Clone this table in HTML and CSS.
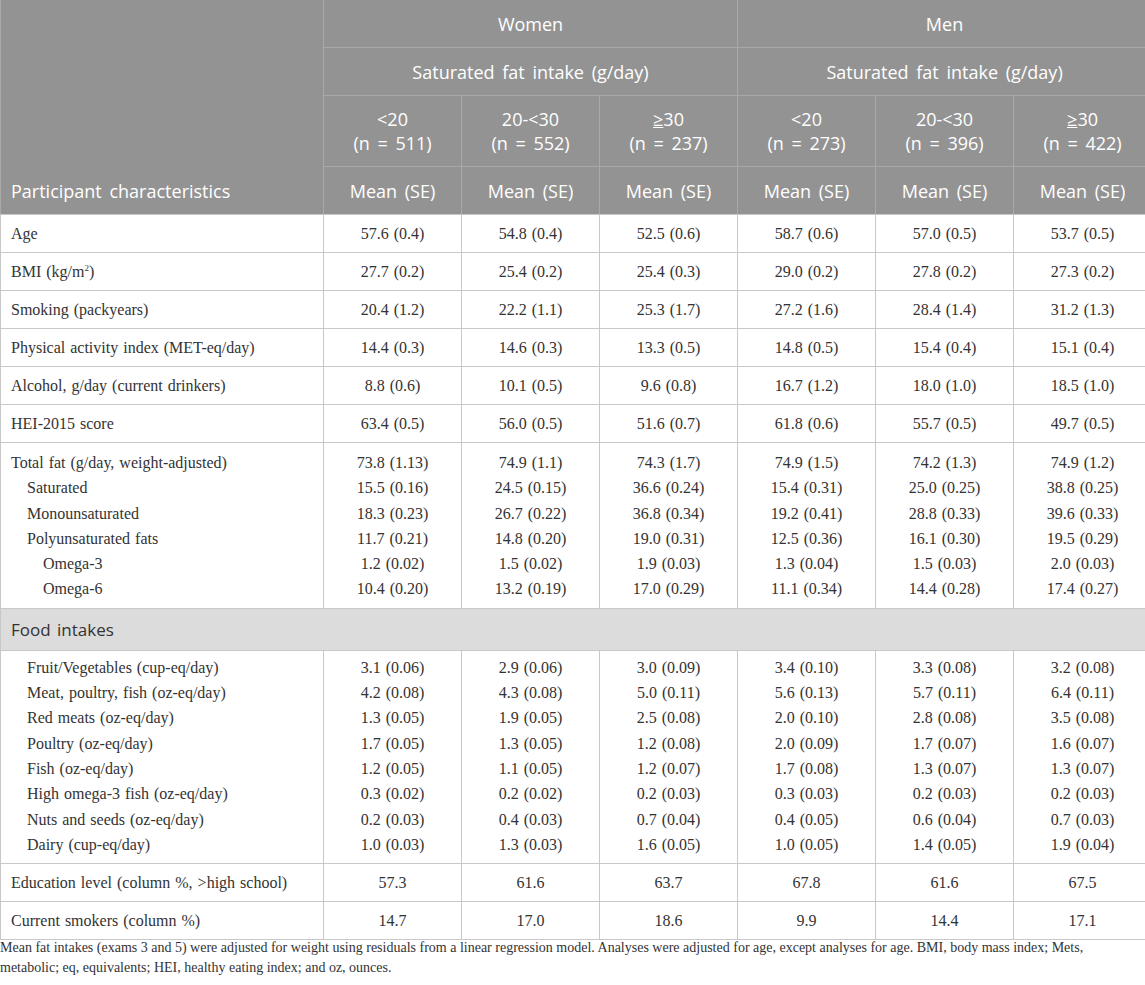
FILE: index.html
```html
<!DOCTYPE html>
<html lang="en">
<head>
    <meta charset="UTF-8">
    <meta name="viewport" content="width=device-width, initial-scale=1.0">
    <title>Participant characteristics by saturated fat intake</title>
    <link rel="stylesheet" href="styles.css">
</head>
<body>
    <div class="table-wrap">
        <table class="data-table">
            <colgroup>
                <col class="col-label">
                <col class="col-val"><col class="col-val"><col class="col-val">
                <col class="col-val"><col class="col-val"><col class="col-val">
            </colgroup>
            <thead>
                <tr class="h-row">
                    <th rowspan="4" class="h-label">Participant characteristics</th>
                    <th colspan="3">Women</th>
                    <th colspan="3">Men</th>
                </tr>
                <tr class="h-row">
                    <th colspan="3">Saturated fat intake (g/day)</th>
                    <th colspan="3">Saturated fat intake (g/day)</th>
                </tr>
                <tr class="h-row h-range">
                    <th>&lt;20<br>(n = 511)</th>
                    <th>20-&lt;30<br>(n = 552)</th>
                    <th><span class="geq">≥</span>30<br>(n = 237)</th>
                    <th>&lt;20<br>(n = 273)</th>
                    <th>20-&lt;30<br>(n = 396)</th>
                    <th><span class="geq">≥</span>30<br>(n = 422)</th>
                </tr>
                <tr class="h-row">
                    <th>Mean (SE)</th>
                    <th>Mean (SE)</th>
                    <th>Mean (SE)</th>
                    <th>Mean (SE)</th>
                    <th>Mean (SE)</th>
                    <th>Mean (SE)</th>
                </tr>
            </thead>

            <tbody class="single">
                <tr><td>Age</td><td>57.6 (0.4)</td><td>54.8 (0.4)</td><td>52.5 (0.6)</td><td>58.7 (0.6)</td><td>57.0 (0.5)</td><td>53.7 (0.5)</td></tr>
                <tr><td>BMI (kg/m<sup>2</sup>)</td><td>27.7 (0.2)</td><td>25.4 (0.2)</td><td>25.4 (0.3)</td><td>29.0 (0.2)</td><td>27.8 (0.2)</td><td>27.3 (0.2)</td></tr>
                <tr><td>Smoking (packyears)</td><td>20.4 (1.2)</td><td>22.2 (1.1)</td><td>25.3 (1.7)</td><td>27.2 (1.6)</td><td>28.4 (1.4)</td><td>31.2 (1.3)</td></tr>
                <tr><td>Physical activity index (MET-eq/day)</td><td>14.4 (0.3)</td><td>14.6 (0.3)</td><td>13.3 (0.5)</td><td>14.8 (0.5)</td><td>15.4 (0.4)</td><td>15.1 (0.4)</td></tr>
                <tr><td>Alcohol, g/day (current drinkers)</td><td>8.8 (0.6)</td><td>10.1 (0.5)</td><td>9.6 (0.8)</td><td>16.7 (1.2)</td><td>18.0 (1.0)</td><td>18.5 (1.0)</td></tr>
                <tr><td>HEI-2015 score</td><td>63.4 (0.5)</td><td>56.0 (0.5)</td><td>51.6 (0.7)</td><td>61.8 (0.6)</td><td>55.7 (0.5)</td><td>49.7 (0.5)</td></tr>
            </tbody>

            <tbody class="group group-fat">
                <tr><td>Total fat (g/day, weight-adjusted)</td><td>73.8 (1.13)</td><td>74.9 (1.1)</td><td>74.3 (1.7)</td><td>74.9 (1.5)</td><td>74.2 (1.3)</td><td>74.9 (1.2)</td></tr>
                <tr><td class="indent-1">Saturated</td><td>15.5 (0.16)</td><td>24.5 (0.15)</td><td>36.6 (0.24)</td><td>15.4 (0.31)</td><td>25.0 (0.25)</td><td>38.8 (0.25)</td></tr>
                <tr><td class="indent-1">Monounsaturated</td><td>18.3 (0.23)</td><td>26.7 (0.22)</td><td>36.8 (0.34)</td><td>19.2 (0.41)</td><td>28.8 (0.33)</td><td>39.6 (0.33)</td></tr>
                <tr><td class="indent-1">Polyunsaturated fats</td><td>11.7 (0.21)</td><td>14.8 (0.20)</td><td>19.0 (0.31)</td><td>12.5 (0.36)</td><td>16.1 (0.30)</td><td>19.5 (0.29)</td></tr>
                <tr><td class="indent-2">Omega-3</td><td>1.2 (0.02)</td><td>1.5 (0.02)</td><td>1.9 (0.03)</td><td>1.3 (0.04)</td><td>1.5 (0.03)</td><td>2.0 (0.03)</td></tr>
                <tr><td class="indent-2">Omega-6</td><td>10.4 (0.20)</td><td>13.2 (0.19)</td><td>17.0 (0.29)</td><td>11.1 (0.34)</td><td>14.4 (0.28)</td><td>17.4 (0.27)</td></tr>
            </tbody>

            <tbody class="section">
                <tr><td colspan="7">Food intakes</td></tr>
            </tbody>

            <tbody class="group group-food">
                <tr><td class="indent-1">Fruit/Vegetables (cup-eq/day)</td><td>3.1 (0.06)</td><td>2.9 (0.06)</td><td>3.0 (0.09)</td><td>3.4 (0.10)</td><td>3.3 (0.08)</td><td>3.2 (0.08)</td></tr>
                <tr><td class="indent-1">Meat, poultry, fish (oz-eq/day)</td><td>4.2 (0.08)</td><td>4.3 (0.08)</td><td>5.0 (0.11)</td><td>5.6 (0.13)</td><td>5.7 (0.11)</td><td>6.4 (0.11)</td></tr>
                <tr><td class="indent-1">Red meats (oz-eq/day)</td><td>1.3 (0.05)</td><td>1.9 (0.05)</td><td>2.5 (0.08)</td><td>2.0 (0.10)</td><td>2.8 (0.08)</td><td>3.5 (0.08)</td></tr>
                <tr><td class="indent-1">Poultry (oz-eq/day)</td><td>1.7 (0.05)</td><td>1.3 (0.05)</td><td>1.2 (0.08)</td><td>2.0 (0.09)</td><td>1.7 (0.07)</td><td>1.6 (0.07)</td></tr>
                <tr><td class="indent-1">Fish (oz-eq/day)</td><td>1.2 (0.05)</td><td>1.1 (0.05)</td><td>1.2 (0.07)</td><td>1.7 (0.08)</td><td>1.3 (0.07)</td><td>1.3 (0.07)</td></tr>
                <tr><td class="indent-1">High omega-3 fish (oz-eq/day)</td><td>0.3 (0.02)</td><td>0.2 (0.02)</td><td>0.2 (0.03)</td><td>0.3 (0.03)</td><td>0.2 (0.03)</td><td>0.2 (0.03)</td></tr>
                <tr><td class="indent-1">Nuts and seeds (oz-eq/day)</td><td>0.2 (0.03)</td><td>0.4 (0.03)</td><td>0.7 (0.04)</td><td>0.4 (0.05)</td><td>0.6 (0.04)</td><td>0.7 (0.03)</td></tr>
                <tr><td class="indent-1">Dairy (cup-eq/day)</td><td>1.0 (0.03)</td><td>1.3 (0.03)</td><td>1.6 (0.05)</td><td>1.0 (0.05)</td><td>1.4 (0.05)</td><td>1.9 (0.04)</td></tr>
            </tbody>

            <tbody class="single">
                <tr><td>Education level (column %, &gt;high school)</td><td>57.3</td><td>61.6</td><td>63.7</td><td>67.8</td><td>61.6</td><td>67.5</td></tr>
                <tr><td>Current smokers (column %)</td><td>14.7</td><td>17.0</td><td>18.6</td><td>9.9</td><td>14.4</td><td>17.1</td></tr>
            </tbody>
        </table>
    </div>

    <p class="footnote">Mean fat intakes (exams 3 and 5) were adjusted for weight using residuals from a linear regression model. Analyses were adjusted for age, except analyses for age. BMI, body mass index; Mets, metabolic; eq, equivalents; HEI, healthy eating index; and oz, ounces.</p>
</body>
</html>
```

FILE: styles.css
```css
html, body {
    margin: 0;
    padding: 0;
    background: #ffffff;
    overflow: hidden;
}
body {
    font-family: "Liberation Serif", "Times New Roman", serif;
    color: #333333;
    width: 1145px;
}
.table-wrap {
    width: 1145px;
    overflow: hidden;
}
.data-table {
    width: 1151px;
    border-collapse: collapse;
    table-layout: fixed;
    font-size: 16px;
    word-spacing: 1px;
}
.col-label {
    width: 323px;
}
.col-val {
    width: 138px;
}

/* header */
.data-table thead th {
    background: #939393;
    color: #ffffff;
    font-family: "Open Sans", "Noto Sans", sans-serif;
    font-weight: 400;
    font-size: 18px;
    word-spacing: 3px;
    line-height: 24px;
    padding: 12px 4px 11px;
    text-align: center;
    border: 1px solid #a9a9a9;
    border-top: none;
}
.data-table thead .h-range th {
    padding: 11px 4px 11px;
}
.data-table thead .h-label {
    text-align: left;
    vertical-align: bottom;
    padding: 0 10px 11px;
    border-left: 1px solid #a9a9a9;
    border-bottom: 1px solid #c8c8c8;
}
.data-table thead tr:last-child th {
    border-bottom: 1px solid #c8c8c8;
}
.geq {
    text-decoration: underline;
    text-underline-offset: 1px;
}

/* body */
.data-table td {
    border-left: 1px solid #c8c8c8;
    border-right: 1px solid #c8c8c8;
    text-align: center;
    white-space: nowrap;
}
.data-table td:first-child {
    text-align: left;
    padding-left: 10px;
}
.single td {
    line-height: 21px;
    padding-top: 8px;
    padding-bottom: 8px;
    border-bottom: 1px solid #c8c8c8;
}
sup {
    font-size: 9px;
    line-height: 0;
    vertical-align: 6px;
}
.group td {
    line-height: 25.3px;
    padding-top: 0;
    padding-bottom: 0;
}
.group-fat tr:first-child td {
    padding-top: 7px;
}
.group-fat tr:last-child td {
    padding-bottom: 6px;
}
.group-food tr:first-child td {
    padding-top: 4px;
}
.group-food tr:last-child td {
    padding-bottom: 6px;
}
.group tr:last-child td {
    border-bottom: 1px solid #c8c8c8;
}
.data-table td.indent-1 {
    padding-left: 26px;
}
.data-table td.indent-2 {
    padding-left: 42px;
}

.section td {
    background: #dcdcdc;
    font-family: "Open Sans", "Noto Sans", sans-serif;
    font-size: 17px;
    word-spacing: 2px;
    line-height: 24px;
    padding: 9px 10px 8px;
    border-bottom: 1px solid #c8c8c8;
}

.footnote {
    margin: -2px 0 0;
    font-size: 14px;
    line-height: 20px;
    color: #333333;
    width: 1090px;
}
```
